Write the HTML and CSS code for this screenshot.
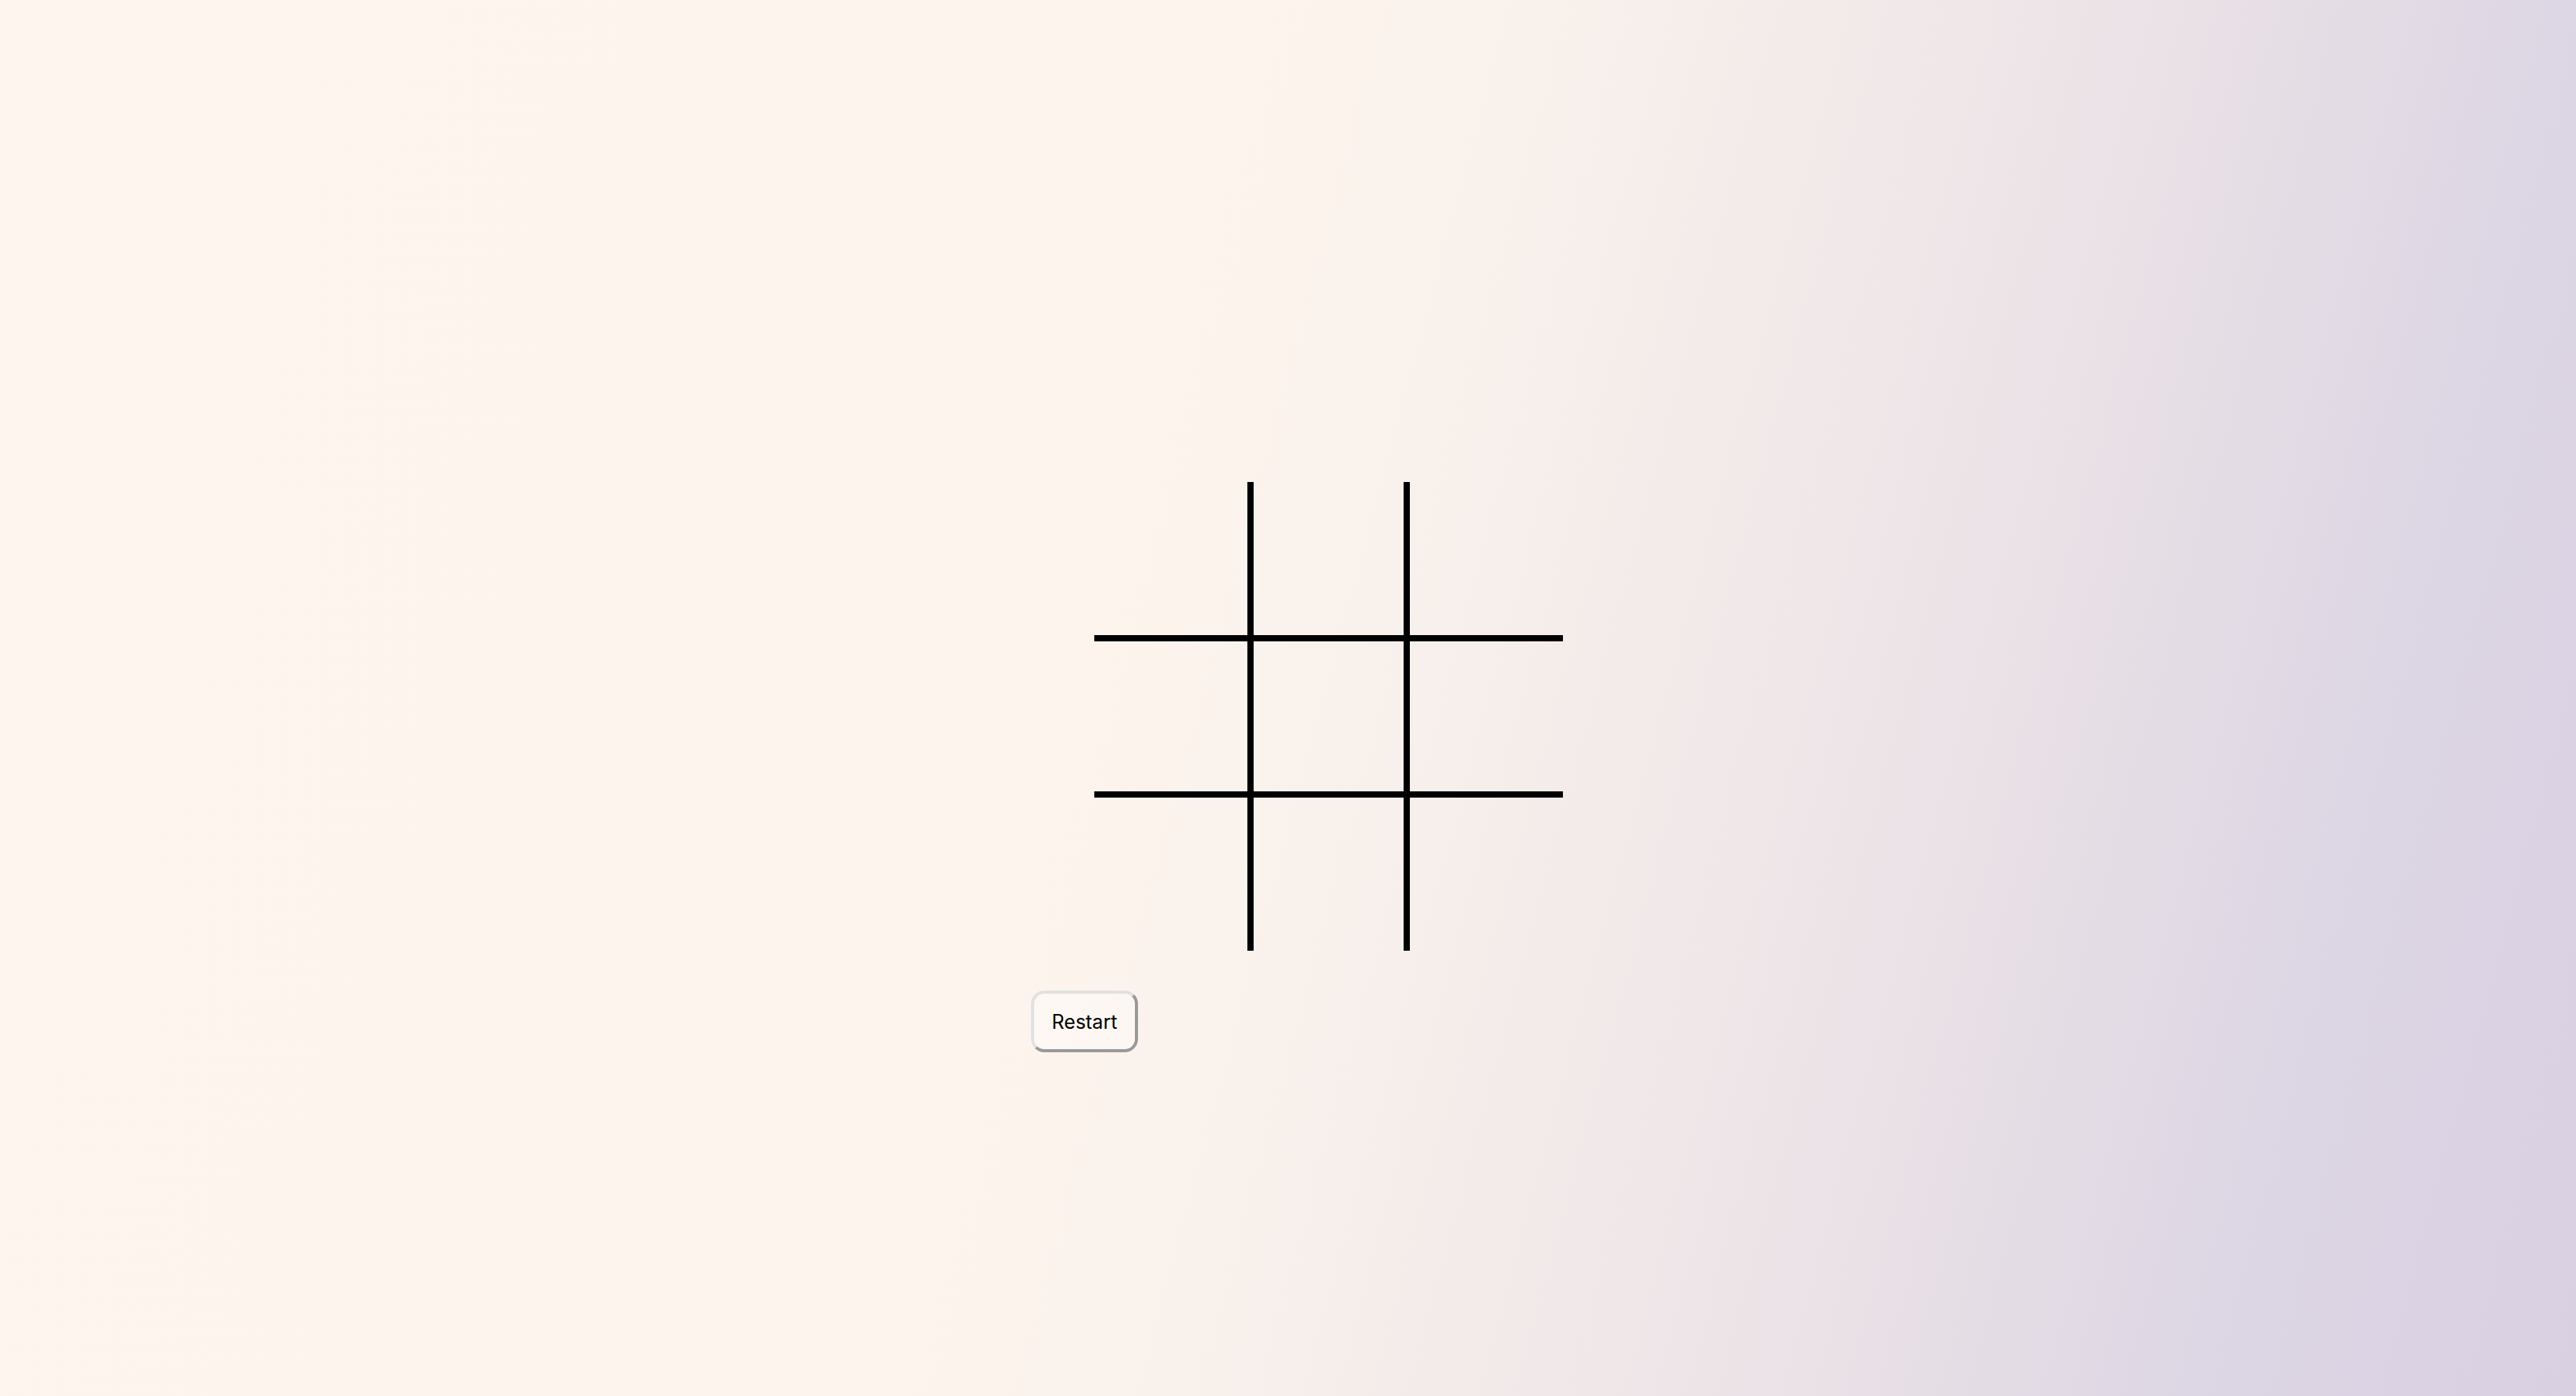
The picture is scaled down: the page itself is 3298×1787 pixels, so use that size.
FILE: index.html
```html
<!DOCTYPE html>
<html lang="en">
<head>
<meta charset="utf-8">
<title>Tic Tac Toe</title>
<link rel="stylesheet" href="styles.css">
</head>
<body>
<main class="game">
  <div class="board">
    <div class="cell r1 c1"></div>
    <div class="cell r1 c2"></div>
    <div class="cell r1 c3"></div>
    <div class="cell r2 c1"></div>
    <div class="cell r2 c2"></div>
    <div class="cell r2 c3"></div>
    <div class="cell r3 c1"></div>
    <div class="cell r3 c2"></div>
    <div class="cell r3 c3"></div>
  </div>
  <div class="controls">
    <button class="restart" type="button">Restart</button>
  </div>
</main>
</body>
</html>
```

FILE: styles.css
```css
html, body {
  margin: 0;
  padding: 0;
  height: 100%;
}

body {
  font-family: "Inter", "Noto Sans", sans-serif;
  background: linear-gradient(105deg,
    #fef6ee 0%,
    #fdf5ed 42%,
    #f7efeb 56%,
    #efe7e8 67%,
    #e6dee5 78%,
    #ddd6e4 87%,
    #d9d0e2 100%);
  overflow: hidden;
}

.game {
  display: flex;
  flex-direction: column;
  align-items: flex-start;
  padding: 617px 0 0 1320px;
}

.board {
  display: grid;
  grid-template-columns: repeat(3, 200px);
  grid-template-rows: repeat(3, 200px);
  margin-left: 81px;
}

.cell {
  box-sizing: border-box;
  border: 0 solid #000;
}

.c1 { border-right-width: 4px; }
.c2 { border-left-width: 4px; border-right-width: 4px; }
.c3 { border-left-width: 4px; }
.r1 { border-bottom-width: 4px; }
.r2 { border-top-width: 4px; border-bottom-width: 4px; }
.r3 { border-top-width: 4px; }

.controls {
  margin-top: 51px;
}

.restart {
  box-sizing: border-box;
  width: 137px;
  height: 79px;
  padding: 0;
  font-family: "Inter", "Noto Sans", sans-serif;
  font-size: 25px;
  color: #000;
  background: rgba(255, 255, 255, 0.35);
  border-style: solid;
  border-width: 4px;
  border-color: #e1e1e1 #999999 #999999 #e1e1e1;
  border-radius: 17px;
  cursor: pointer;
}
```
